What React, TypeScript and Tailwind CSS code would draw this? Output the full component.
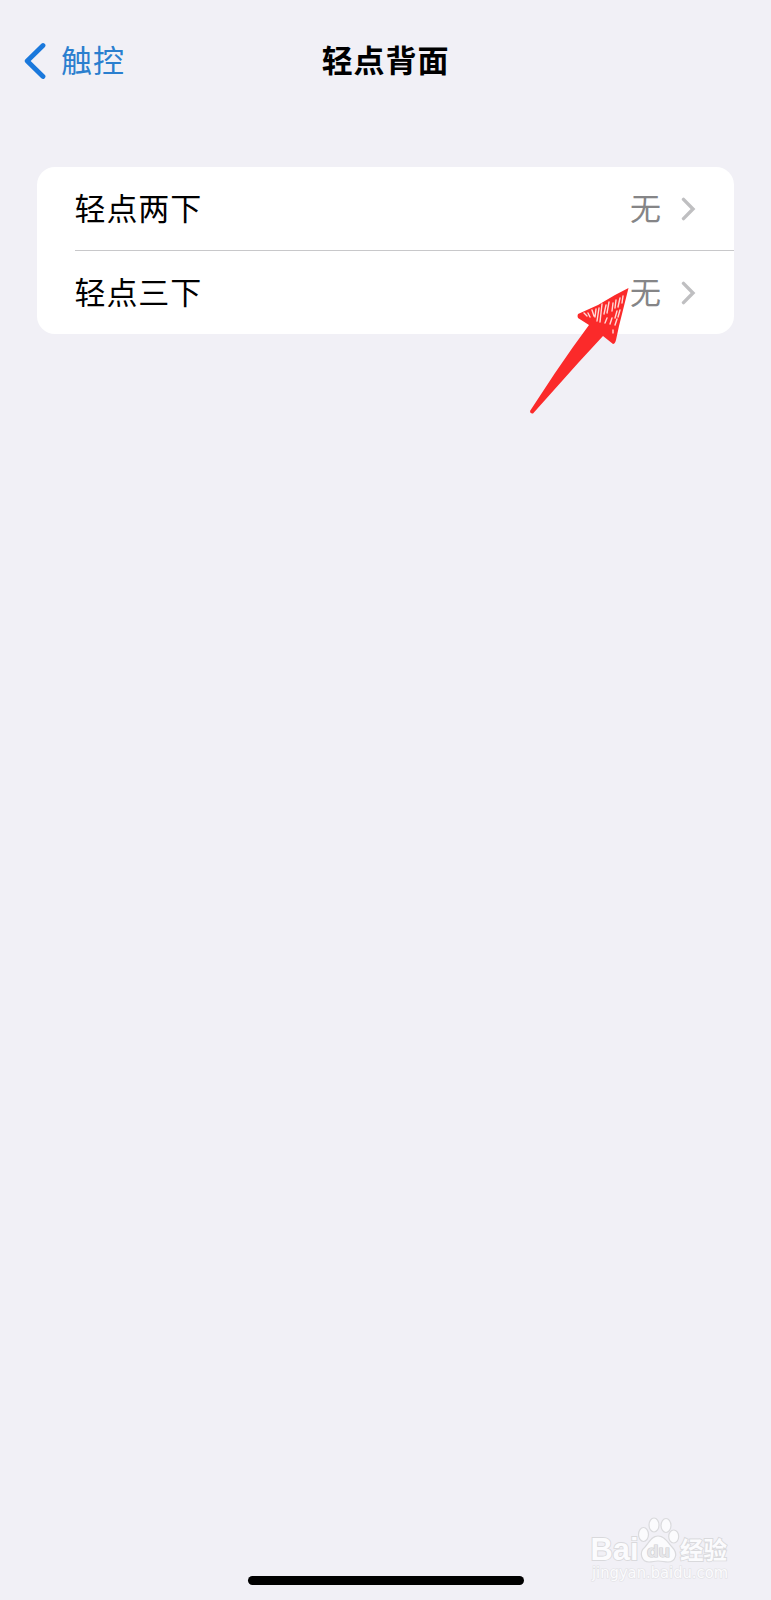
const rows = [
  { label: '轻点两下', value: '无' },
  { label: '轻点三下', value: '无' },
];

function BackIcon() {
  return (
    <svg width="22" height="38" viewBox="0 0 22 38" fill="none" className="shrink-0">
      <path d="M19 3.5 L3.2 19 L19 34.5" stroke="#1a78dc" strokeWidth="4.8" strokeLinecap="round" strokeLinejoin="round" />
    </svg>
  );
}

function RowChevron() {
  return (
    <svg width="16" height="24" viewBox="0 0 16 24" fill="none" className="shrink-0">
      <path d="M2.5 2.4 L12 12 L2.5 21.6" stroke="#bfbfc1" strokeWidth="3.4" strokeLinecap="round" strokeLinejoin="miter" />
    </svg>
  );
}

function Header() {
  return (
    <header className="grid h-[122px] grid-cols-[1fr_auto_1fr] items-center px-6">
      <button className="flex items-center gap-[15px] text-[31px] tracking-[0.9px] text-[#2b7fcf]">
        <BackIcon />
        <span className="pb-[3px]">触控</span>
      </button>
      <h1 className="pb-[3px] text-[31px] font-bold tracking-[0.9px] text-black">轻点背面</h1>
      <span />
    </header>
  );
}

function Row({ label, value, last }: { label: string; value: string; last: boolean }) {
  return (
    <div className="pl-[37.5px]">
      <div
        className={
          last
            ? 'flex h-[83px] items-center justify-between pr-[37px]'
            : 'flex h-[84px] items-center justify-between border-b border-[#c8c8ca] pr-[37px]'
        }
      >
        <span className="pb-[3px] text-black">{label}</span>
        <div className="flex items-center gap-[19px]">
          <span className="pb-0.5 text-[#858587]">{value}</span>
          <RowChevron />
        </div>
      </div>
    </div>
  );
}

function Arrow() {
  return (
    <svg width="110" height="136" viewBox="0 0 110 136" fill="none" className="absolute top-[284px] left-[525px]">
      <path
        d="M103.5 4 L90 11 L73 21 L53 30 Q52 32 53 34 L64 41 L48 63 L30 89 L5 127 Q5 130 8 129.5 L54 78 L78 52 L83 56 L88 60 Q90 60 91 56 L94 42 Z"
        fill="#fb2a2a"
      />
      <path
        d="M59 29 l3 3 M63 29 l2 4 M67 26 l2 6 M71 25 l-1 8 M74 24 l-2 13 M77 20 l-2 18 M81 21 l-2 9 M84 18 l-2 11 M88 19 l-1 8 M91 16 l-1 8 M95 14 l-2 9 M98 12 l-1 7 M95 26 l-2 7 M92 27 l-2 7 M92 35 l-2 6 M87 34 l-2 6 M82 34 l-2 5 M88 46 v3"
        stroke="#ffd9d7"
        strokeWidth="1.4"
        strokeLinecap="round"
      />
    </svg>
  );
}

function Watermark() {
  return (
    <svg width="150" height="76" viewBox="0 0 150 76" className="absolute top-[1510px] left-[587px]">
      <g fill="#fbfbfd" stroke="#dadadd" strokeWidth="1.2">
        <ellipse cx="56.5" cy="24.5" rx="5" ry="7" />
        <ellipse cx="67" cy="15" rx="5" ry="7" />
        <ellipse cx="79" cy="15.5" rx="5" ry="7" />
        <ellipse cx="86.7" cy="26.5" rx="5" ry="6.5" />
        <path d="M71 26 C64 26 62 33 58 37 C51 43 55 52 62 52 C66 52 67 51 71 51 C75 51 77 52 81 52 C88 52 92 44 85 37 C81 33 78 26 71 26 Z" />
      </g>
      <g fill="#fbfbfd" stroke="#d9d9dc" strokeWidth="1.8" paintOrder="stroke" className="font-['Liberation_Sans',sans-serif]">
        <text x="3.5" y="50" fontSize="31" fontWeight="700" textLength="48" lengthAdjust="spacingAndGlyphs">Bai</text>
        <text x="60" y="46.5" fontSize="17" fontWeight="700" textLength="23" lengthAdjust="spacingAndGlyphs" fill="#e6e6e9" stroke="#cfcfd2" strokeWidth="1.2">du</text>
        <text x="93" y="49" fontSize="24" fontWeight="700" textLength="47" lengthAdjust="spacingAndGlyphs" className="font-['Noto_Sans_CJK_SC',sans-serif]">经验</text>
        <text x="5" y="68" fontSize="15" textLength="136" lengthAdjust="spacingAndGlyphs" strokeWidth="1.2" stroke="#e1e1e4" className="font-['DejaVu_Sans',sans-serif]">jingyan.baidu.com</text>
      </g>
    </svg>
  );
}

export default function App() {
  return (
    <div className="relative flex h-[1600px] w-full flex-col overflow-hidden bg-[#f1f0f6] font-['Noto_Sans_CJK_SC',sans-serif]">
      <Header />
      <main className="mx-[37px] mt-[45px] rounded-[18px] bg-white text-[31px] tracking-[0.9px]">
        {rows.map((row, index) => (
          <Row key={row.label} label={row.label} value={row.value} last={index === rows.length - 1} />
        ))}
      </main>
      <Arrow />
      <Watermark />
      <div className="mx-auto mt-auto mb-[15px] h-[9px] w-[276px] rounded-full bg-black" />
    </div>
  );
}
